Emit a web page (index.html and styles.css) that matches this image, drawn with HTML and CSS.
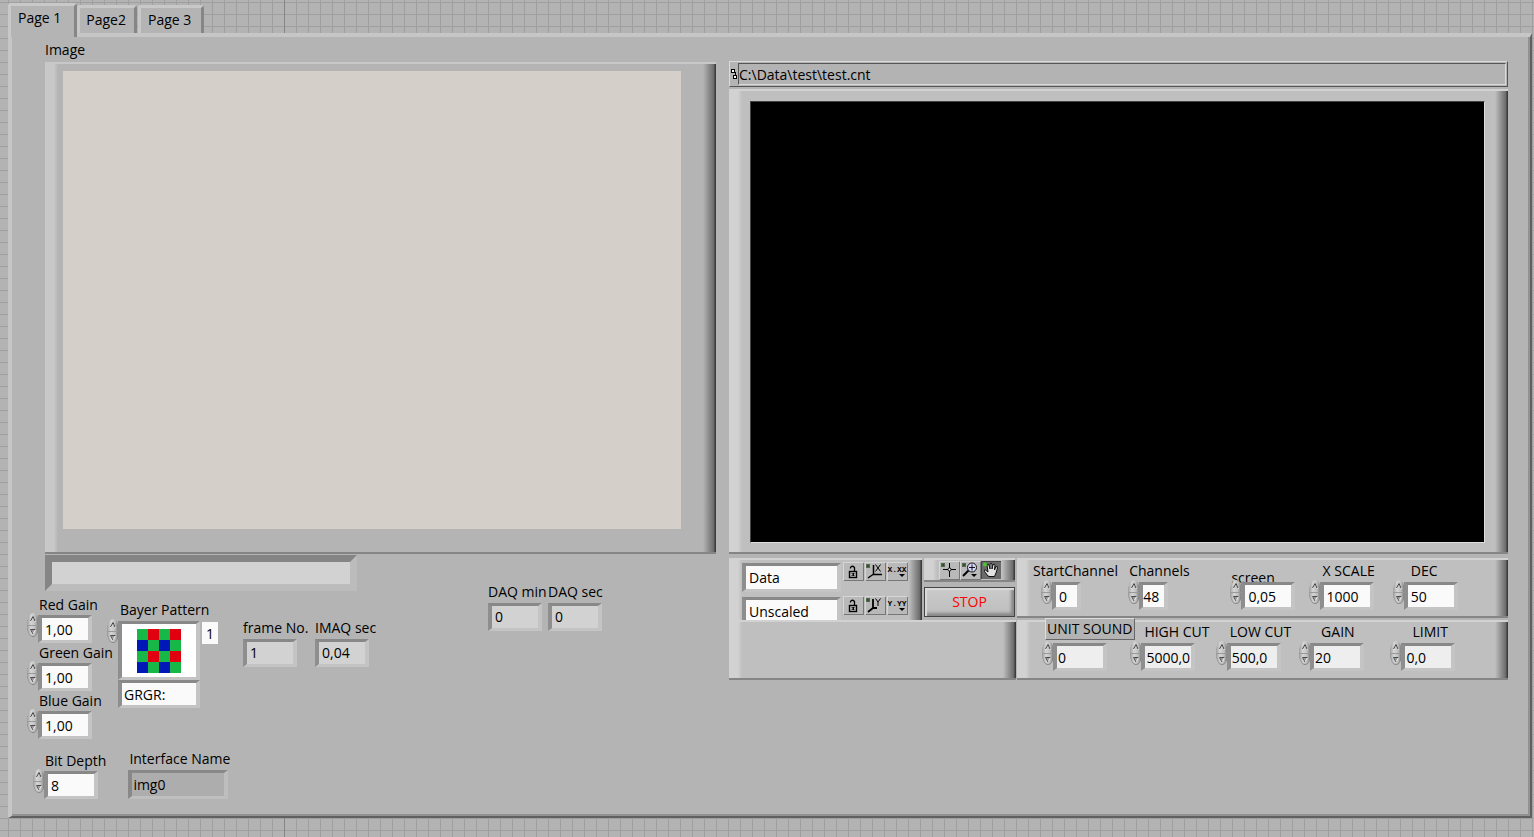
FILE: index.html
```html
<!DOCTYPE html>
<html lang="en">
<head>
<meta charset="utf-8">
<title>Acquisition panel</title>
<link rel="stylesheet" href="styles.css">
</head>
<body>
<svg class="defs" width="0" height="0" aria-hidden="true">
  <symbol id="up" viewBox="0 0 12 12"><path d="M3.500 8.500L6 3.500L8.500 8.500" fill="none" stroke="#f4f4f4"/><path d="M3.500 8L6 3.500L8 8" fill="none" stroke="#3c3c3c"/></symbol>
  <symbol id="down" viewBox="0 0 12 12"><path d="M3.500 3.500H8.500L6 8Z" fill="#9a9a9a" stroke="#eee"/><path d="M8.500 3.500H3.500L6 8" fill="none" stroke="#4a4a4a"/></symbol>
  <symbol id="lock" viewBox="0 0 20 18"><path d="M7.500 6.500V5.500Q9 3 11.500 5.500V9" fill="none" stroke="#000" stroke-width="1.300"/><rect x="6.500" y="9.500" width="7" height="6" fill="#bbb" stroke="#000" stroke-width="1.400"/><path d="M8 11.500H12M8 13.500H12" stroke="#555" stroke-width=".7"/><rect x="9.500" y="11" width="1.500" height="3"/></symbol>
  <symbol id="led" viewBox="0 0 4 4"><rect width="4" height="4" fill="#566650"/><rect x="1" y="1" width="2" height="2" fill="#285a20"/></symbol>
</svg>

<nav class="tabs" role="tablist">
  <button class="tab tab-active" role="tab" aria-selected="true">Page 1</button>
  <button class="tab" role="tab">Page2</button>
  <button class="tab" role="tab">Page 3</button>
</nav>

<main class="page">
  <section class="camera">
    <h2 class="caption">Image</h2>
    <div class="bevel image-frame"><div class="image"></div></div>
    <div class="lower">
      <div class="camera-settings">
        <output class="message" aria-label="Message"></output>
        <div class="settings">
          <div class="gains">
            <div class="field"><label for="red">Red Gain</label><div class="entry"><span class="spin"><button aria-label="Increase"><svg><use href="#up"/></svg></button><button aria-label="Decrease"><svg><use href="#down"/></svg></button></span><input id="red" value="1,00"></div></div>
            <div class="field"><label for="green">Green Gain</label><div class="entry"><span class="spin"><button aria-label="Increase"><svg><use href="#up"/></svg></button><button aria-label="Decrease"><svg><use href="#down"/></svg></button></span><input id="green" value="1,00"></div></div>
            <div class="field"><label for="blue">Blue Gain</label><div class="entry"><span class="spin"><button aria-label="Increase"><svg><use href="#up"/></svg></button><button aria-label="Decrease"><svg><use href="#down"/></svg></button></span><input id="blue" value="1,00"></div></div>
          </div>
          <div class="field bayer">
            <label for="bayer">Bayer Pattern</label>
            <div class="entry">
              <span class="spin"><button aria-label="Next pattern"><svg><use href="#up"/></svg></button><button aria-label="Previous pattern"><svg><use href="#down"/></svg></button></span>
              <div class="pattern">
                <div class="well swatch">
                  <svg width="44" height="44" viewBox="0 0 4 4" shape-rendering="crispEdges"><rect width="4" height="4" fill="#18b848"/><path d="M1 0h1v1h-1zM3 0h1v1h-1zM1 2h1v1h-1zM3 2h1v1h-1z" fill="#e00010"/><path d="M0 1h1v1h-1zM2 1h1v1h-1zM0 3h1v1h-1zM2 3h1v1h-1z" fill="#0018b8"/></svg>
                </div>
                <input id="bayer" class="pattern-name" value="GRGR:">
              </div>
              <input class="pattern-index" aria-label="Pattern index" value="1">
            </div>
          </div>
          <div class="readouts">
            <div class="readout"><label for="frame">frame No.</label><output id="frame" class="well">1</output></div>
            <div class="readout"><label for="imaq">IMAQ sec</label><output id="imaq" class="well">0,04</output></div>
          </div>
        </div>
        <div class="device">
          <div class="field"><label for="depth">Bit Depth</label><div class="entry"><span class="spin"><button aria-label="Increase"><svg><use href="#up"/></svg></button><button aria-label="Decrease"><svg><use href="#down"/></svg></button></span><input id="depth" value="8"></div></div>
          <div class="interface"><label for="iface">Interface Name</label><input id="iface" value="img0"></div>
        </div>
      </div>
      <div class="daq">
        <div class="readout"><label for="dmin">DAQ min</label><output id="dmin" class="well">0</output></div>
        <div class="readout"><label for="dsec">DAQ sec</label><output id="dsec" class="well">0</output></div>
      </div>
    </div>
  </section>

  <section class="recording">
    <div class="path">
      <svg width="8" height="12" viewBox="0 0 8 12" shape-rendering="crispEdges" aria-hidden="true"><path d="M4 4H5V7" fill="none" stroke="#000"/><rect x="1.500" y="1.500" width="3" height="3" fill="#fff" stroke="#000"/><rect x="3.500" y="7.500" width="3" height="3" fill="#fff" stroke="#000"/></svg>
      <input aria-label="File path" value="C:\Data\test\test.cnt">
    </div>
    <div class="bevel pale graph"><div class="plot"></div></div>

    <div class="console">
      <div class="graph-controls">
        <div class="graph-top">
          <div class="bevel pale legend">
            <div class="axis">
              <input aria-label="X axis name" value="Data">
              <button class="tool" aria-label="Lock X scale"><svg viewBox="0 0 20 18"><use href="#lock"/></svg></button>
              <button class="tool" aria-label="Autoscale X"><svg viewBox="0 0 20 18"><use href="#led" x="1" y="2" width="4" height="4"/><path d="M8.500 3V12.500H17M3 16L8 12.500" fill="none" stroke="#000" stroke-width="1.500"/><path d="M10.500 2.500L15.500 9.500M15.500 2.500L10.500 9.500" stroke="#000"/></svg></button>
              <button class="tool format" aria-label="X format">X.XX<i></i></button>
            </div>
            <div class="axis">
              <input aria-label="Y axis name" value="Unscaled">
              <button class="tool" aria-label="Lock Y scale"><svg viewBox="0 0 20 18"><use href="#lock"/></svg></button>
              <button class="tool" aria-label="Autoscale Y"><svg viewBox="0 0 20 18"><use href="#led" x="1" y="2" width="4" height="4"/><path d="M8 3V13M3 16L8 12H12" fill="none" stroke="#000" stroke-width="1.800"/><path d="M10.500 2.500L13 6L15.500 2.500M13 6V10" fill="none" stroke="#000"/></svg></button>
              <button class="tool format" aria-label="Y format">Y.YY<i></i></button>
            </div>
          </div>
          <div class="actions">
            <div class="bevel pale palette">
              <button class="tool" aria-label="Cursor"><svg viewBox="0 0 20 18"><use href="#led" x="2" y="2" width="4" height="4"/><path d="M10.500 2V16M4 8.500H17" stroke="#000"/><circle cx="10.500" cy="8.500" r="1.500" fill="#fff" stroke="#000"/></svg></button>
              <button class="tool" aria-label="Zoom"><svg viewBox="0 0 20 18"><use href="#led" x="2" y="2" width="4" height="4"/><path d="M9 9L3 15" stroke="#000" stroke-width="2"/><circle cx="12" cy="6.500" r="4.500" fill="#d8d8fc" stroke="#111"/><path d="M9 6.500H15M12 3.500V9.500" stroke="#111"/><path d="M11 13H17L14 16Z"/></svg></button>
              <button class="tool pressed" aria-label="Pan"><svg viewBox="0 0 20 18"><path d="M7 15L3.500 10.500Q3 8.500 4.500 9L7 11L6 4Q6.500 2.500 8 4L9 8L9 3Q10 1.500 11 3V8L12 3.500Q13.500 2.500 14 4L13.500 9L15 5.500Q16.500 5 16.500 7L15 12L13.500 15.500H8Z" fill="#e2e2e2" stroke="#111"/><circle cx="4" cy="3.500" r="2" fill="#47c925"/></svg></button>
            </div>
            <button class="stop">STOP</button>
          </div>
        </div>
        <div class="bevel pale blank"></div>
      </div>

      <div class="channel-controls">
        <div class="bevel pale channel-row">
          <div class="field wide"><label for="start">StartChannel</label><div class="entry"><span class="spin"><button aria-label="Increase"><svg><use href="#up"/></svg></button><button aria-label="Decrease"><svg><use href="#down"/></svg></button></span><input id="start" class="short" value="0"></div></div>
          <div class="field flush"><label for="channels">Channels</label><div class="entry"><span class="spin"><button aria-label="Increase"><svg><use href="#up"/></svg></button><button aria-label="Decrease"><svg><use href="#down"/></svg></button></span><input id="channels" class="short tight" value="48"></div></div>
          <div class="field flush low"><label for="screen">screen</label><div class="entry"><span class="spin"><button aria-label="Increase"><svg><use href="#up"/></svg></button><button aria-label="Decrease"><svg><use href="#down"/></svg></button></span><input id="screen" value="0,05"></div></div>
          <div class="field"><label for="xscale">X SCALE</label><div class="entry"><span class="spin"><button aria-label="Increase"><svg><use href="#up"/></svg></button><button aria-label="Decrease"><svg><use href="#down"/></svg></button></span><input id="xscale" value="1000"></div></div>
          <div class="field indent"><label for="dec">DEC</label><div class="entry"><span class="spin"><button aria-label="Increase"><svg><use href="#up"/></svg></button><button aria-label="Decrease"><svg><use href="#down"/></svg></button></span><input id="dec" value="50"></div></div>
        </div>
        <div class="bevel pale filter-row">
          <div class="field plate"><label for="unit">UNIT SOUND</label><div class="entry"><span class="spin"><button aria-label="Increase"><svg><use href="#up"/></svg></button><button aria-label="Decrease"><svg><use href="#down"/></svg></button></span><input id="unit" value="0"></div></div>
          <div class="field"><label for="high">HIGH CUT</label><div class="entry"><span class="spin"><button aria-label="Increase"><svg><use href="#up"/></svg></button><button aria-label="Decrease"><svg><use href="#down"/></svg></button></span><input id="high" value="5000,0"></div></div>
          <div class="field"><label for="lowcut">LOW CUT</label><div class="entry"><span class="spin"><button aria-label="Increase"><svg><use href="#up"/></svg></button><button aria-label="Decrease"><svg><use href="#down"/></svg></button></span><input id="lowcut" value="500,0"></div></div>
          <div class="field indent"><label for="gain">GAIN</label><div class="entry"><span class="spin"><button aria-label="Increase"><svg><use href="#up"/></svg></button><button aria-label="Decrease"><svg><use href="#down"/></svg></button></span><input id="gain" value="20"></div></div>
          <div class="field indent"><label for="limit">LIMIT</label><div class="entry"><span class="spin"><button aria-label="Increase"><svg><use href="#up"/></svg></button><button aria-label="Decrease"><svg><use href="#down"/></svg></button></span><input id="limit" value="0,0"></div></div>
        </div>
      </div>
    </div>
  </section>
</main>
</body>
</html>
```

FILE: styles.css
```css
* { box-sizing: border-box; }

body {
  margin: 0;
  padding: 3px 2px 19px 8px;
  min-height: 100vh;
  display: flex;
  flex-direction: column;
  font: 14px/20px "Open Sans", "Noto Sans", sans-serif;
  color: #000;
  background-color: #b3b3b3;
  background-image:
    linear-gradient(#868686, #868686),
    linear-gradient(to right, #9f9f9f 1px, transparent 1px),
    linear-gradient(#9f9f9f 1px, transparent 1px);
  background-size: 1px 100%, 12px 12px, 12px 12px;
  background-position: 284px 0, 8px 0, 0 2px;
  background-repeat: no-repeat, repeat, repeat;
}

button, input, output { font: inherit; color: inherit; }
button { padding: 0; border: 0; background: none; }
label { display: block; white-space: nowrap; }
.defs { position: absolute; }

/* Tabs */
.tabs { display: flex; align-items: flex-end; height: 30px; }
.tab {
  height: 28px;
  padding: 0 8px 2px 6px;
  border: solid;
  border-width: 3px 3px 0;
  border-color: #c8c8c8 #868686 #c8c8c8 #c8c8c8;
  border-radius: 3px 3px 0 0;
  background: #b4b4b4;
  margin-right: 1px;
}
.tab + .tab + .tab { padding: 0 10px 2px 7px; }
.tab-active {
  position: relative;
  z-index: 1;
  height: 34px;
  margin: 0 0 -4px;
  padding: 0 13px 7px 7px;
}

/* Page body */
.page {
  flex: 1;
  display: grid;
  grid-template-columns: 689fr 779fr;
  gap: 13px;
  padding: 3px 22px 14px 15px;
  border: solid;
  border-width: 4px 2px 2px 4px;
  border-color: #c6c6c6 #606060 #606060 #c6c6c6;
  box-shadow: inset -2px -2px #929292;
  background: #b4b4b4;
}
.camera, .recording { min-width: 0; }

.bevel {
  --face: #b4b4b4;
  --shine: #c8c8c8;
  background:
    linear-gradient(var(--shine), var(--shine)) top / 100% 2px no-repeat,
    linear-gradient(#858585, #858585) bottom / 100% 2px no-repeat,
    linear-gradient(to right, var(--face), #6a6a6a 11px, #3c3c3c 12px) right / 13px 100% no-repeat,
    linear-gradient(to right, var(--shine) 9px, var(--face) 13px) left / 13px 100% no-repeat,
    var(--face);
}
.pale { --face: #bfbfbf; --shine: #d2d2d2; }

/* Camera side */
.caption { margin: 0 0 2px 18px; font: inherit; }
.image-frame { margin-left: 18px; padding: 9px 35px 25px 18px; }
.image { height: 458px; background: #d4cfc8; }

.lower { display: flex; gap: 119px; }
.camera-settings { padding-top: 1px; }
.message {
  display: block;
  width: 312px;
  height: 36px;
  margin-left: 18px;
  border: 7px solid;
  border-color: #858585 #bcbcbc #bcbcbc #858585;
  background: #d2d2d2;
}
.settings { display: flex; padding-top: 4px; }
.gains { width: 64px; }

.entry { display: flex; align-items: flex-start; }
.field label { padding-left: 12px; }
.entry input, .well, .interface input, .axis input {
  display: block;
  border: solid;
  border-width: 3px 4px;
  border-color: #888 #c4c4c4 #c4c4c4 #8e8e8e;
  border-radius: 0;
  background: #fafafa;
  outline: 0;
}
.entry input { width: 54px; height: 28px; margin-left: -1px; padding: 0 0 0 3px; }
.spin {
  display: flex;
  flex-direction: column;
  flex: none;
  width: 12px;
  height: 24px;
  margin-top: -2px;
  border-radius: 50%;
  overflow: hidden;
  background: linear-gradient(to right, #a0a0a0, #d6d6d6 4px, #c0c0c0 8px, #6c6c6c);
  box-shadow: inset 0 -1px 1px #808080;
}
.spin button { width: 12px; height: 12px; line-height: 0; }
.spin button + button { border-top: 1px solid #999; }
.spin svg { width: 12px; height: 12px; display: block; }

.bayer { padding: 5px 0 0 16px; }
.bayer label { padding-left: 13px; }
.bayer .entry { padding-top: 1px; }
.pattern { width: 82px; margin-left: -1px; }
.swatch { display: flex; justify-content: center; align-items: center; height: 59px; background: #fff; }
.entry .pattern-name { width: 82px; margin: 0; padding: 0 0 0 2px; }
.entry .pattern-index { width: 16px; height: 22px; margin: 1px 0 0 2px; padding: 0 0 0 4px; border: 0; }

.readouts { display: flex; gap: 18px; padding: 23px 0 0 25px; }
.readout { width: 54px; }
.readout output { height: 28px; padding: 1px 3px; line-height: 20px; background: #d2d2d2; margin-top: 1px; }

.device { display: flex; align-items: flex-end; gap: 22px; padding: 10px 0 0 6px; }
.interface input { width: 100px; height: 29px; margin-top: 1px; padding: 0 1px; background: #adadad; border-color: #888 #bebebe #bebebe #888; }
.interface label { padding-left: 1px; }
.daq { display: flex; gap: 6px; padding-top: 28px; }

/* Recording side */
.recording { padding-top: 21px; }
.path {
  display: flex;
  align-items: center;
  height: 26px;
  margin-bottom: 2px;
  padding: 1px 1px 1px 0;
  border: 1px solid;
  border-color: #dadada #555 #555 #dadada;
}
.path svg { flex: none; }
.path input {
  flex: 1;
  min-width: 0;
  height: 22px;
  padding: 0;
  border: 1px solid;
  border-color: #555 #dadada #dadada #555;
  background: #b3b3b3;
}
.graph { padding: 12px 23px 11px 21px; }
.plot { height: 442px; background: #000; border: 1px solid; border-color: #444 #ddd #ddd #444; }

.console { display: grid; grid-template-columns: 287px 1fr; gap: 1px; padding-top: 4px; }
.graph-top { display: grid; grid-template-columns: 193px 1fr; gap: 2px; height: 62px; overflow: hidden; }
.legend { height: 64px; padding: 4px 0 0 13px; overflow: hidden; }
.axis { display: flex; height: 34px; gap: 2px; }
.axis input { width: 99px; height: 29px; padding: 0 3px; margin-top: 1px; }
.tool {
  flex: none;
  width: 20px;
  height: 18px;
  background: #b9b9b9;
  box-shadow: inset 1px 1px #d6d6d6, 1px 1px #777;
}
.tool svg { display: block; width: 20px; height: 18px; }
.pressed { background: #6a6a6a; box-shadow: inset 1px 1px #444; }
.format { font: bold 8px/9px "Liberation Mono", monospace; }
.format i {
  display: block;
  margin: 0 0 0 12px;
  width: 6px;
  height: 3px;
  background: #000;
  clip-path: polygon(0 0, 100% 0, 50% 100%);
}
.palette { display: flex; justify-content: flex-end; gap: 1px; height: 24px; padding: 3px 14px 3px 0; }
.actions { display: flex; flex-direction: column; gap: 5px; padding-right: 1px; }
.stop {
  height: 30px;
  color: #f00;
  border: 1px solid #444;
  background: linear-gradient(#cbcbcb, #bdbdbd);
  box-shadow: inset 2px 2px 1px #dadada, inset -3px -3px 3px #888;
}
.blank { height: 60px; }

.channel-row, .filter-row { display: grid; height: 60px; }
.channel-row { grid-template-columns: 87fr 102fr 78fr 84fr 115fr; padding: 3px 0 0 24px; }
.filter-row { grid-template-columns: 88fr 85fr 83fr 91fr 117fr; padding: 2px 0 0 25px; margin-top: 2px; }
.channel-row .field, .filter-row .field { min-width: 0; }
.channel-row .entry, .filter-row .entry { padding-top: 1px; }
.filter-row input { background: #eee; padding-left: 1px; }
.channel-row label, .filter-row label { padding-left: 14px; }
.channel-row .wide label { padding: 0; margin-left: -8px; }
.channel-row .flush label { padding-left: 1px; }
.channel-row .indent label { padding-left: 18px; }
.filter-row .indent label { padding-left: 22px; }
.channel-row .low label { height: 20px; padding-top: 7px; }
.entry .short { width: 29px; }
.entry .tight { padding-left: 0; }
.filter-row .plate label {
  width: 90px;
  height: 22px;
  margin: -4px 0 2px 3px;
  padding: 0 1px;
  line-height: 20px;
  border: 1px solid;
  border-color: #ddd #666 #666 #ddd;
  background: #b3b3b3;
}
```
